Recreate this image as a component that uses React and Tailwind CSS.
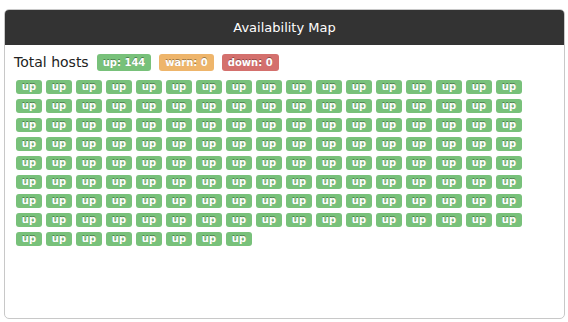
export default function App() {
  const hosts = Array.from({ length: 144 });
  return (
    <div className="w-[568px] h-[322px] bg-white pt-[9px] pl-[4px] pr-[3px] pb-[3px] font-['DejaVu_Sans',sans-serif]">
      <div className="h-full flex flex-col rounded-[5px] border border-[#c8c8c8] overflow-hidden">
        <div className="h-[35px] shrink-0 bg-[#333333] text-white text-[13px] flex items-center justify-center">
          Availability Map
        </div>
        <div className="px-[9px] pt-[8px]">
          <div className="flex items-center gap-[8px] h-[18px]">
            <span className="text-[14px] text-[#222]">Total hosts</span>
            <span className="rounded-[3px] bg-[#78c17a] text-white text-[10px] font-bold px-[6px] h-[17px] leading-[17px] [text-shadow:0_-1px_0_rgba(0,0,0,0.35)]">up: 144</span>
            <span className="rounded-[3px] bg-[#eeb56b] text-white text-[10px] font-bold px-[6px] h-[17px] leading-[17px] [text-shadow:0_-1px_0_rgba(0,0,0,0.35)]">warn: 0</span>
            <span className="rounded-[3px] bg-[#d4706d] text-white text-[10px] font-bold px-[6px] h-[17px] leading-[17px] [text-shadow:0_-1px_0_rgba(0,0,0,0.35)]">down: 0</span>
          </div>
          <div className="mt-[9px] ml-[2px] flex flex-wrap gap-x-[4px] gap-y-[5px] w-[520px]">
            {hosts.map((_, i) => (
              <span
                key={i}
                className="w-[26px] h-[14px] rounded-[3px] bg-[#78c17a] text-white text-[10px] font-bold leading-[14px] text-center [text-shadow:0_-1px_0_rgba(0,0,0,0.35)]"
              >
                up
              </span>
            ))}
          </div>
        </div>
      </div>
    </div>
  );
}
